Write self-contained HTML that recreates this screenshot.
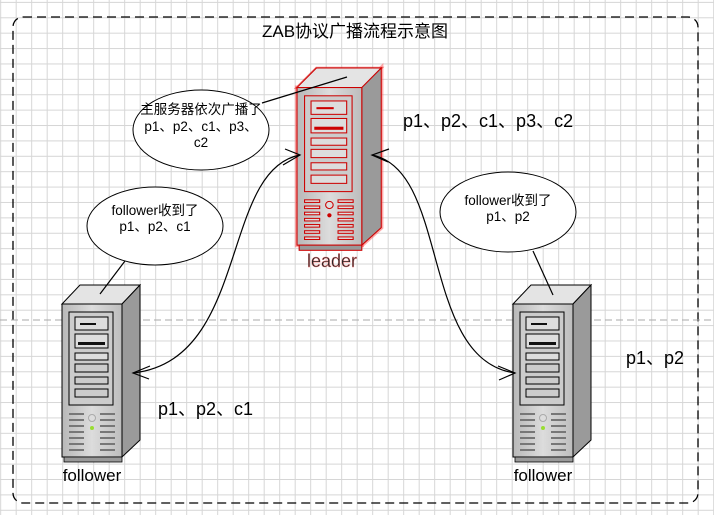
<!DOCTYPE html>
<html><head><meta charset="utf-8"><style>
html,body{margin:0;padding:0}
body{width:714px;height:515px;position:relative;overflow:hidden;background-color:#fff;
background-image:linear-gradient(to right,#d6d6d6 1px,transparent 1px),linear-gradient(to bottom,#d6d6d6 1px,transparent 1px);
background-size:15.5px 15.4px;background-position:0.2px 1.9px;font-family:"Liberation Sans","Noto Sans CJK SC",sans-serif;}
svg{position:absolute;left:0;top:0}
</style></head><body>
<svg width="714" height="515" viewBox="0 0 714 515" font-family="Liberation Sans, Noto Sans CJK SC, sans-serif">
<defs>
<linearGradient id="fr" x1="0" x2="1"><stop offset="0" stop-color="#b8b8b8"/><stop offset=".5" stop-color="#dcdcdc"/><stop offset="1" stop-color="#bdbdbd"/></linearGradient>
<g id="srv">
<polygon points="0,19 18,0 78,0 60,19" fill="#e4e4e4" stroke="#000"/>
<polygon points="60,19 78,0 78,155 60,172" fill="#9a9a9a" stroke="#000"/>
<rect x="0" y="19" width="60" height="153" fill="url(#fr)" stroke="#000"/>
<rect x="2" y="172" width="58" height="5" fill="#999" stroke="#000" stroke-width=".8"/>
<rect x="7" y="27" width="44" height="93" fill="#ccc" stroke="#000"/>
<rect x="13" y="32" width="33" height="13" fill="#ddd" stroke="#000"/>
<rect x="13" y="49" width="33" height="14" fill="#ddd" stroke="#000"/>
<rect x="16" y="57" width="27" height="3" fill="#111"/>
<rect x="13" y="68" width="33" height="7" fill="#ddd" stroke="#000"/>
<rect x="13" y="79" width="33" height="8" fill="#ccc" stroke="#000"/>
<rect x="13" y="92" width="33" height="7" fill="#ccc" stroke="#000"/>
<rect x="13" y="104" width="33" height="8" fill="#ccc" stroke="#000"/>
<rect x="18" y="38" width="16" height="2" fill="#111"/>
<g fill="#777"><rect x="7" y="128" width="15" height="2"/><rect x="7" y="134" width="15" height="2"/><rect x="7" y="140" width="15" height="2"/><rect x="7" y="146" width="15" height="2"/><rect x="7" y="152" width="15" height="2"/><rect x="7" y="158" width="15" height="2"/><rect x="7" y="164" width="15" height="2"/>
<rect x="38" y="128" width="15" height="2"/><rect x="38" y="134" width="15" height="2"/><rect x="38" y="140" width="15" height="2"/><rect x="38" y="146" width="15" height="2"/><rect x="38" y="152" width="15" height="2"/><rect x="38" y="158" width="15" height="2"/><rect x="38" y="164" width="15" height="2"/></g>
<circle cx="30" cy="133" r="3.5" fill="#ddd" stroke="#aaa"/>
<circle cx="30" cy="143" r="2" fill="#9d3"/>
</g>
</defs>
<rect x="13" y="17" width="685" height="486" rx="10" fill="none" stroke="#000" stroke-width="1.3" stroke-dasharray="9,5"/>
<line x1="0" y1="320" x2="714" y2="320" stroke="#aaa" stroke-dasharray="7,4"/>
<text x="355" y="37" font-size="17" text-anchor="middle">ZAB协议广播流程示意图</text>

<use href="#srv" transform="translate(62,285)"/>
<use href="#srv" transform="translate(513,285)"/>
<g transform="translate(297,68) scale(1.08,1.03)">
<polygon points="0,19 18,0 78,0 60,19" fill="#e4e4e4" stroke="#d00" stroke-width="2.5" opacity=".5"/>
<rect x="0" y="19" width="60" height="153" fill="none" stroke="#f55" stroke-width="4" opacity=".5"/>
<polygon points="60,19 78,0 78,155 60,172" fill="none" stroke="#f55" stroke-width="4" opacity=".5"/>
<polygon points="0,19 18,0 78,0 60,19" fill="#e4e4e4" stroke="#c00"/>
<polygon points="60,19 78,0 78,155 60,172" fill="#9a9a9a" stroke="#c00"/>
<rect x="0" y="19" width="60" height="153" fill="url(#fr)" stroke="#c00"/>
<rect x="2" y="172" width="58" height="5" fill="#999" stroke="#c00"/>
<rect x="7" y="27" width="44" height="93" fill="#ccc" stroke="#c00"/>
<g fill="#ddd" stroke="#c00"><rect x="13" y="32" width="33" height="13"/><rect x="13" y="49" width="33" height="14"/><rect x="13" y="68" width="33" height="7"/><rect x="13" y="79" width="33" height="8"/><rect x="13" y="92" width="33" height="7"/><rect x="13" y="104" width="33" height="8"/></g>
<rect x="16" y="57" width="27" height="3" fill="#c00"/><rect x="18" y="38" width="16" height="2" fill="#c00"/>
<g fill="#ddd" stroke="#c00"><rect x="7" y="128" width="14" height="2.5"/><rect x="7" y="134" width="14" height="2.5"/><rect x="7" y="140" width="14" height="2.5"/><rect x="7" y="146" width="14" height="2.5"/><rect x="7" y="152" width="14" height="2.5"/><rect x="7" y="158" width="14" height="2.5"/><rect x="7" y="164" width="14" height="2.5"/>
<rect x="38" y="128" width="14" height="2.5"/><rect x="38" y="134" width="14" height="2.5"/><rect x="38" y="140" width="14" height="2.5"/><rect x="38" y="146" width="14" height="2.5"/><rect x="38" y="152" width="14" height="2.5"/><rect x="38" y="158" width="14" height="2.5"/><rect x="38" y="164" width="14" height="2.5"/></g>
<circle cx="30" cy="133" r="3.5" fill="#ddd" stroke="#c00"/><circle cx="30" cy="143" r="2" fill="#c00"/>
</g>
<text x="332" y="267" font-size="18" text-anchor="middle" fill="#222" stroke="#f88" stroke-width=".4">leader</text>
<text x="92" y="481" font-size="17" text-anchor="middle">follower</text>
<text x="543" y="481" font-size="17" text-anchor="middle">follower</text>

<g fill="none" stroke="#000" stroke-width="1.2">
<path d="M300,155 C220,170 250,360 133,373"/>
<path d="M283,165 L300,155 L285,149"/>
<path d="M150,366 L133,373 L149,379"/>
<path d="M372,155 C450,170 420,360 515,373"/>
<path d="M389,149 L372,155 L388,162"/>
<path d="M498,366 L515,373 L499,380"/>
<line x1="262" y1="103" x2="347" y2="77"/>
<line x1="128" y1="257" x2="100" y2="294"/>
<line x1="533" y1="251" x2="553" y2="295"/>
</g>
<g fill="#fff" stroke="#000">
<ellipse cx="201" cy="130" rx="68" ry="40"/>
<ellipse cx="155" cy="226" rx="68" ry="39"/>
<ellipse cx="508" cy="212" rx="68" ry="40"/>
</g>
<g font-size="13.5" text-anchor="middle">
<text x="201" y="114">主服务器依次广播了</text>
<text x="201" y="131">p1、p2、c1、p3、</text>
<text x="201" y="147">c2</text>
<text x="155" y="215">follower收到了</text>
<text x="155" y="231">p1、p2、c1</text>
<text x="508" y="205">follower收到了</text>
<text x="508" y="221">p1、p2</text>
</g>
<g font-size="18">
<text x="403" y="127">p1、p2、c1、p3、c2</text>
<text x="626" y="364">p1、p2</text>
<text x="158" y="415">p1、p2、c1</text>
</g>
</svg>
</body></html>
